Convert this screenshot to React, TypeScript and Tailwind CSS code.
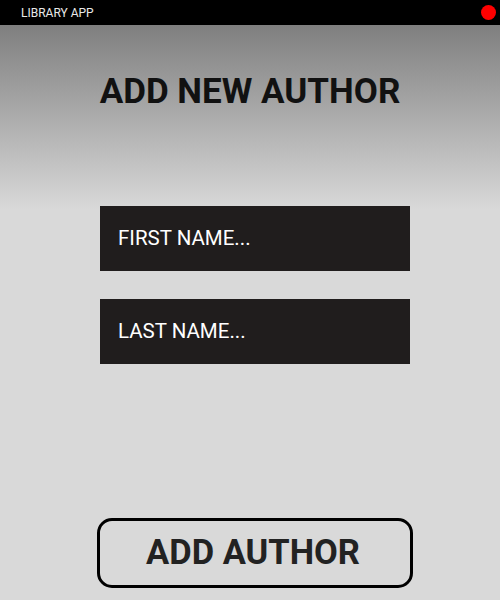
import React from "react";

export default function App() {
  return (
    <div
      className="w-[500px] h-[600px] flex flex-col overflow-hidden"
      style={{ fontFamily: "Roboto, 'Liberation Sans', sans-serif" }}
    >
      <div className="h-[25px] bg-black flex items-center justify-between pl-[21px] pr-[4px] shrink-0">
        <span className="text-[12px] text-[#e8e8e8] leading-none">LIBRARY APP</span>
        <span className="w-[15px] h-[15px] rounded-full bg-[#ff0000]" />
      </div>
      <div className="flex-1 flex flex-col items-center bg-[linear-gradient(to_bottom,#7f7f7f_0px,#d9d9d9_185px,#d9d9d9_100%)]">
        <h1 className="mt-[47px] text-[35px] font-bold text-[#111] leading-[40px]">ADD NEW AUTHOR</h1>
        <div className="flex flex-col items-center pl-[10px]">
          <div className="mt-[94px] w-[310px] h-[65px] bg-[#201d1d] flex items-center pl-[18px]">
            <span className="text-[20.5px] text-white">FIRST NAME...</span>
          </div>
          <div className="mt-[28px] w-[310px] h-[65px] bg-[#201d1d] flex items-center pl-[18px]">
            <span className="text-[20.5px] text-white">LAST NAME...</span>
          </div>
          <button className="mt-[154px] w-[316px] h-[70px] border-[3px] border-black rounded-[15px] flex items-center justify-center">
            <span className="text-[34.5px] font-bold text-[#222] -ml-[4px]">ADD AUTHOR</span>
          </button>
        </div>
      </div>
    </div>
  );
}
